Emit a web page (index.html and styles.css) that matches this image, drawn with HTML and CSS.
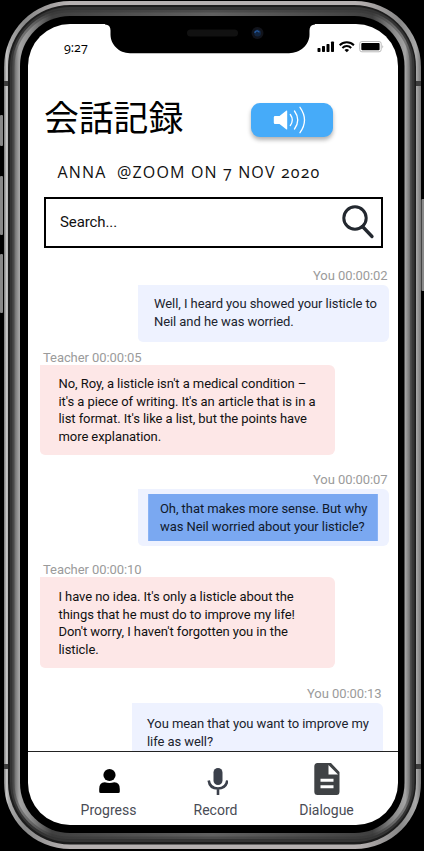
FILE: index.html
```html
<!DOCTYPE html>
<html lang="ja">
<head>
<meta charset="utf-8">
<title>会話記録</title>
<link rel="stylesheet" href="styles.css">
</head>
<body>
<div class="device">
  <svg class="frame" width="424" height="851" viewBox="0 0 424 851" aria-hidden="true">
    <defs>
      <linearGradient id="side" x1="0" x2="1" y1="0" y2="0">
        <stop offset="0" stop-color="#777"/><stop offset=".006" stop-color="#c4c4c4"/><stop offset=".012" stop-color="#aaa"/><stop offset=".05" stop-color="#888"/><stop offset=".15" stop-color="#b5b0b0"/><stop offset=".85" stop-color="#b5b0b0"/><stop offset=".95" stop-color="#888"/><stop offset=".988" stop-color="#aaa"/><stop offset="1" stop-color="#777"/>
      </linearGradient>
      <linearGradient id="band" gradientUnits="userSpaceOnUse" x1="12" x2="412.500" y1="0" y2="0">
        <stop offset="0" stop-color="#444"/><stop offset=".01" stop-color="#808080"/><stop offset=".018" stop-color="#a4a4a4"/><stop offset=".045" stop-color="#8c8c8c"/><stop offset=".1" stop-color="#404040"/><stop offset=".5" stop-color="#606060"/><stop offset=".9" stop-color="#404040"/><stop offset=".955" stop-color="#8c8c8c"/><stop offset=".982" stop-color="#a4a4a4"/><stop offset=".99" stop-color="#808080"/><stop offset="1" stop-color="#444"/>
      </linearGradient>
    </defs>
    <g fill="#888">
      <rect x="0" y="115" width="3" height="31" rx="1"/><rect x="0" y="176" width="3" height="59" rx="1"/><rect x="0" y="254" width="3" height="59" rx="1"/><rect x="421.500" y="199" width="3" height="92" rx="1"/>
    </g>
    <rect x="4" y="1" width="417" height="848" rx="66" fill="url(#side)"/>
    <rect x="8" y="5" width="408" height="839.500" rx="62" fill="#1c1c1c"/>
    <rect x="10" y="7" width="404.500" height="835" rx="60" fill="#353535"/>
    <rect x="12" y="10" width="400.500" height="829" rx="57" fill="url(#band)"/>
    <rect x="13" y="11" width="398.500" height="827" rx="56" fill="none" stroke="#333" stroke-opacity=".4" stroke-width="3"/>
    <rect x="20" y="16" width="384.500" height="817" rx="50" fill="#000"/>
    <path d="M4 81h4v5H4zM416 81h5v5h-5zM4 764h4v5H4zM416 764h5v5h-5z" fill="#3c3c3c"/>
  </svg>
  <main class="screen">
    <header class="status">
      <span class="clock">9:27</span>
      <svg class="signals" width="68" height="14" viewBox="0 0 68 14">
        <g fill="#000">
          <rect x="0.500" y="8" width="3" height="4" rx=".8"/><rect x="5" y="6" width="3" height="6" rx=".8"/><rect x="9.500" y="4" width="3" height="8" rx=".8"/><rect x="14" y="1.500" width="3" height="10.500" rx=".8"/>
        </g>
        <g fill="none" stroke="#000" stroke-width="2"><path d="M22.700 5.200a10 10 0 0 1 14.200 0M25.400 8a6.100 6.100 0 0 1 8.800 0"/></g>
        <path d="M27.500 9.900a3.500 3.500 0 0 1 4.600 0l-2.300 2.400z"/>
        <rect x="42.700" y="1.500" width="21.500" height="10.300" rx="2.200" fill="none" stroke="#bbb"/><rect x="44.300" y="3" width="18.300" height="7.300" rx="1"/><path d="M65.500 5q1.500 1.700 0 3.400z" fill="#999"/>
      </svg>
    </header>
    <svg class="notch" width="210" height="32" viewBox="0 0 210 32" aria-hidden="true">
      <path d="M0 0h210v1.500q-5.500 0-5.500 6v4C204.500 22 195 30.200 184 30.200H25C14 30.200 5.500 21.500 5.500 11.500v-4q0-6-5.500-6z"/>
      <rect x="82" y="6.500" width="51" height="7" rx="3.500" fill="#111"/>
      <circle cx="152.500" cy="10" r="6" fill="#11131a"/><circle cx="152.500" cy="10" r="3.500" fill="#11243f"/><path d="M149.800 10q.6-2.500 2.700-2.100l2 1.300" fill="none" stroke="#24579a" stroke-width="1.300"/>
    </svg>
    <div class="heading">
      <h1>会話記録</h1>
      <button class="speaker" aria-label="音声">
        <svg width="36" height="30" viewBox="0 0 36 30">
          <path d="M3 11h4.500L14.500 5.500q.7-.4.700.5v18q0 .9-.7.500L7.500 19H3q-1.200 0-1.200-1.200v-5.600Q1.800 11 3 11z" fill="#fff"/>
          <path d="M18.300 9.500q4 5.500 0 11M22.500 6q6.500 9 0 18M28 2.300q9 12.700 0 25.400" fill="none" stroke="#fff" stroke-width="1.300" stroke-linecap="round"/>
        </svg>
      </button>
    </div>
    <p class="session">ANNA&nbsp; @ZOOM ON 7 NOV 2020</p>
    <div class="search">
      <span>Search...</span>
      <svg width="34" height="36" viewBox="0 0 34 36" fill="none" stroke="#23282f"><circle cx="14" cy="14" r="11.200" stroke-width="3"/><path d="M21.500 22.500L31 32.500" stroke-width="3.300" stroke-linecap="round"/></svg>
    </div>
    <section class="chat">
      <article class="message you first">
        <div class="label">You 00:00:02</div>
        <div class="bubble">Well, I heard you showed your listicle to<br>Neil and he was worried.</div>
      </article>
      <article class="message teacher">
        <div class="label">Teacher 00:00:05</div>
        <div class="bubble">No, Roy, a listicle isn't a medical condition –<br>it's a piece of writing. It's an article that is in a<br>list format. It's like a list, but the points have<br>more explanation.</div>
      </article>
      <article class="message you active">
        <div class="label">You 00:00:07</div>
        <div class="bubble"><div class="selection">Oh, that makes more sense. But why<br>was Neil worried about your listicle?</div></div>
      </article>
      <article class="message teacher second">
        <div class="label">Teacher 00:00:10</div>
        <div class="bubble">I have no idea. It's only a listicle about the<br>things that he must do to improve my life!<br>Don't worry, I haven't forgotten you in the<br>listicle.</div>
      </article>
      <article class="message you last">
        <div class="label">You 00:00:13</div>
        <div class="bubble">You mean that you want to improve my<br>life as well?</div>
      </article>
    </section>
    <nav class="tabs">
      <a class="tab"><svg width="24" height="32" viewBox="0 0 24 32"><circle cx="12.500" cy="12" r="6.100"/><path d="M2.200 28.500V26q0-6.700 5.500-6.700 4.800 1.600 9.600 0 5.500 0 5.500 6.700v2.500q0 1.500-1.500 1.500H3.700q-1.500 0-1.500-1.500z"/></svg><span>Progress</span></a>
      <a class="tab"><svg width="24" height="32" viewBox="0 0 24 32"><rect x="9.500" y="5" width="9" height="17" rx="4.500" fill="#3b404b"/><path d="M4.700 17.500c.7 5.500 4 8 9.300 8s8.600-2.500 9.300-8M14 25.500V32" fill="none" stroke="#3b404b" stroke-width="2.600"/></svg><span>Record</span></a>
      <a class="tab"><svg width="26" height="32" viewBox="0 0 26 32"><path fill-rule="evenodd" d="M3.500 0H17l8.500 9v19.500Q25.500 32 22.500 32h-19Q.3 32 .3 28.500v-25Q.3 0 3.500 0zM14.500 2v9.500H24zM6.500 15.700v3h13v-3zm0 6.500v3h13v-3z" fill="#3f4245"/></svg><span>Dialogue</span></a>
    </nav>
  </main>
</div>
</body>
</html>
```

FILE: styles.css
```css
* { box-sizing: border-box; }
body { margin: 0; background: #000; overflow: hidden; }
.device { position: relative; width: 424px; height: 851px; padding: 24px 26px 26px 28px; background: #000; }
.frame { position: absolute; left: 0; top: 0; }
.screen { position: relative; display: flex; flex-direction: column; width: 369.5px; height: 801px; overflow: hidden; background: #fff; border-radius: 42px; font-family: Roboto, "Noto Sans CJK JP", sans-serif; color: #111; }
.notch { position: absolute; left: 77px; top: -1px; }
.status { display: flex; justify-content: space-between; height: 70px; padding: 16px 14px 0 36px; flex: none; }
.clock { font: 12.5px/15px "Open Sans", sans-serif; font-feature-settings: "onum"; color: #000; }
.signals { margin-right: -1px; }
.heading { display: flex; justify-content: space-between; height: 62px; padding: 0 65px 0 16px; flex: none; }
h1 { margin: 0; font: 400 34.8px/44px "Noto Sans CJK JP", sans-serif; color: #000; }
.speaker { display: flex; align-items: center; justify-content: center; width: 82px; height: 34px; margin-top: 9px; padding: 0 4px 0 0; border: 0; border-radius: 9px; background: #46abf9; box-shadow: 0 3px 4px rgba(0,0,0,.3); }
.session { flex: none; margin: 0; height: 41px; padding-left: 29.5px; font: 16px/32px "Open Sans", sans-serif; font-feature-settings: "onum"; letter-spacing: 1.15px; white-space: nowrap; }
.search { display: flex; flex: none; align-items: center; justify-content: space-between; width: 339px; height: 51px; margin: 0 0 0 15.5px; padding: 0 6px 1px 14.5px; border: 2px solid #000; font-size: 15px; letter-spacing: -.1px; }
.chat { flex: 1; min-height: 0; overflow: hidden; padding-top: 17px; }
.message { display: flex; flex-direction: column; margin-bottom: 8px; }
.label { font-size: 13px; line-height: 20px; letter-spacing: -.07px; color: #9b9b9b; }
.bubble { padding: 10px 16px; border-radius: 0 6px 6px 6px; font-size: 13px; line-height: 17.7px; letter-spacing: -.07px; white-space: nowrap; }
.you { width: 251px; margin-left: 110px; }
.you .label { padding-right: 1.5px; text-align: right; }
.first .label { height: 20px; line-height: 22px; }
.you .bubble { height: 57px; background: #eef2ff; color: #20242e; }
.teacher { width: 295px; margin-left: 12px; margin-bottom: 15px; }
.teacher .label { padding-left: 3px; line-height: 15px; }
.teacher .bubble { height: 90px; padding-left: 18.5px; background: #fde7e7; }
.active .label { line-height: 19px; }
.you.active .bubble { padding: 5px 11px 5px 10px; color: #10192b; }
.selection { height: 47px; padding: 6px 11px; background: #7aa8f1; border: 1px solid #8ab3f5; border-width: 0 1px; }
.active { margin-bottom: 15px; }
.bubble { border-radius: 0 6px 6px 6px; }
.teacher .bubble, .you .bubble { border-bottom-left-radius: 5px; }
.teacher.second .label { height: 16px; line-height: 17px; }
.teacher.second .bubble { height: 91px; padding-top: 11px; }
.last { margin-left: 104px; }
.last .label { height: 20px; line-height: 21px; }
.last .bubble { padding: 12px 15px; }
.tabs { display: grid; grid-template-columns: 107px 107px 115px; flex: none; height: 74px; padding: 11px 0 0 27px; border-top: 1.5px solid #222; }
.tab { display: flex; flex-direction: column; align-items: center; gap: 5px; font-size: 14px; line-height: 20px; color: #4a4c55; }
```
